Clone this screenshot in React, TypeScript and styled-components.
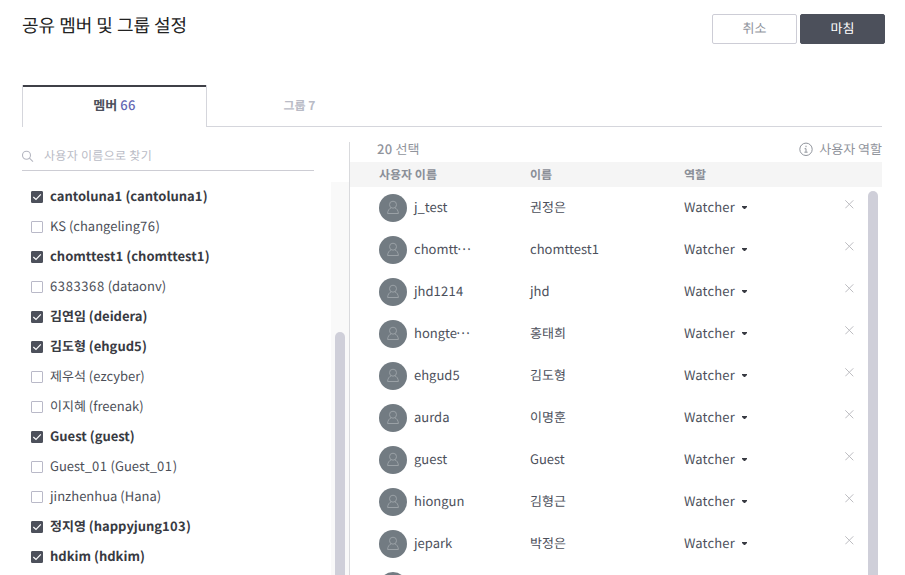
import React from 'react';
import styled, { createGlobalStyle } from 'styled-components';

const GlobalStyle = createGlobalStyle`
  * { box-sizing: border-box; }
  body {
    margin: 0;
    background: #fff;
    overflow: hidden;
    font-family: 'Noto Sans CJK KR', 'Noto Sans', sans-serif;
    font-size: 13px;
    color: #4c505b;
    text-rendering: geometricPrecision;
  }
`;

const Page = styled.main`
  width: 905px;
  height: 575px;
  overflow: hidden;
  display: flex;
  flex-direction: column;
`;

const Header = styled.header`
  height: 85px;
  padding: 14px 20px 0 22px;
  display: flex;
  justify-content: space-between;
  align-items: flex-start;
`;

const Title = styled.h1`
  margin: 0;
  font-size: 18px;
  font-weight: 400;
  line-height: 22px;
  color: #222;
`;

const Actions = styled.div`
  display: flex;
  gap: 3px;
`;

const Button = styled.button<{ $primary?: boolean }>`
  width: 85px;
  height: 30px;
  padding: 0 0 2px;
  border: 1px solid ${p => (p.$primary ? '#4c505b' : '#cdcdd6')};
  border-radius: 2px;
  background: ${p => (p.$primary ? '#4c505b' : '#fff')};
  color: ${p => (p.$primary ? '#fff' : '#90949c')};
  font: inherit;
  line-height: 26px;
  text-rendering: inherit;
`;

const Tabs = styled.nav`
  display: flex;
  height: 42px;
  margin: 0 23px 0 22px;
`;

const Tab = styled.div<{ $active?: boolean }>`
  width: 185px;
  height: 42px;
  text-align: center;
  font-size: ${p => (p.$active ? 13 : 12)}px;
  font-weight: 700;
  line-height: ${p => (p.$active ? 40 : 42)}px;
  color: ${p => (p.$active ? '#4c505b' : '#b9bbc6')};
  border: solid #d5d6dc;
  border-width: ${p => (p.$active ? '0 1px' : '0 0 1px')};
  box-shadow: ${p => (p.$active ? 'inset 0 2px 0 #3f4047' : 'none')};
`;

const TabFill = styled.div`
  flex: 1;
  border-bottom: 1px solid #d5d6dc;
`;

const Count = styled.span`
  color: #6468b4;
  font-weight: 500;
  letter-spacing: 0.4px;
`;

const Body = styled.div`
  display: flex;
  flex: 1;
  min-height: 0;
  margin: 0 23px 0 22px;
`;

const Picker = styled.section`
  width: 327px;
  display: flex;
  flex-direction: column;
`;

const Search = styled.label`
  display: flex;
  align-items: center;
  gap: 10px;
  width: 292px;
  height: 44px;
  padding-top: 13px;
  border-bottom: 1px solid #cdcdd4;
  color: #b9bbc5;
  font-size: 12px;
  letter-spacing: 0.3px;
  line-height: 30px;
  svg { margin-top: 2px; }
`;

const SearchHint = styled.span`
  padding-top: 1px;
`;

const ListArea = styled.div`
  display: flex;
  flex: 1;
  min-height: 0;
  margin-top: 11px;
  overflow: hidden;
`;

const List = styled.ul`
  flex: 1;
  margin: 0;
  padding: 0 0 0 9px;
  list-style: none;
`;

const Member = styled.li<{ $checked: boolean }>`
  display: flex;
  align-items: center;
  gap: 7px;
  height: 30px;
  line-height: 28px;
  white-space: nowrap;
  color: ${p => (p.$checked ? '#383a42' : '#4c4f58')};
  font-weight: ${p => (p.$checked ? 700 : 400)};
`;

const MemberName = styled.span`
  height: 30px;
`;

const Digits = styled.span<{ $spacing: number }>`
  letter-spacing: ${p => p.$spacing}px;
`;

const Ellipsis = styled.span`
  line-height: 0;
  vertical-align: 4px;
  letter-spacing: -0.5px;
  margin-left: -1px;
`;

const Box = styled.span<{ $checked: boolean }>`
  width: 12px;
  height: 12px;
  display: flex;
  border: 1px solid ${p => (p.$checked ? '#4c505b' : '#b9b9c8')};
  border-radius: 1px;
  background: ${p => (p.$checked ? '#4c505b' : '#fff')};
`;

const Track = styled.div`
  width: 18px;
  padding: 150px 4px 0;
  display: flex;
  background: #f9f9f9;
`;

const Thumb = styled.div`
  width: 10px;
  flex: none;
  border-radius: 5px 5px 0 0;
  background: #cfcfd9;
`;

const Selected = styled.section`
  flex: 1;
  margin-top: 15px;
  border-left: 1px solid #d9dadd;
  display: flex;
  flex-direction: column;
  min-width: 0;
`;

const Summary = styled.div`
  display: flex;
  justify-content: space-between;
  height: 20px;
  padding-left: 27px;
  line-height: 14px;
  color: #90949c;
  b { font-weight: 500; letter-spacing: 0.4px; }
`;

const RoleHelp = styled.span`
  display: flex;
  gap: 6px;
`;

const TableHead = styled.div`
  display: grid;
  grid-template-columns: 151px 154px 1fr;
  height: 25px;
  padding-left: 29px;
  line-height: 26px;
  background: #f5f5f5;
  color: #8b8f98;
  font-size: 12px;
  font-weight: 700;
`;

const Rows = styled.div`
  flex: 1;
  min-height: 0;
  display: flex;
  overflow: hidden;
`;

const RowList = styled.div`
  width: 518px;
`;

const RowThumb = styled(Thumb)`
  margin-top: 4px;
`;

const Row = styled.div`
  display: grid;
  grid-template-columns: 35px 116px 154px 161px 1fr;
  height: 42px;
  padding-left: 29px;
  line-height: 40px;
`;

const Avatar = styled.span`
  width: 28px;
  height: 28px;
  margin-top: 7px;
  display: flex;
  align-items: center;
  justify-content: center;
  border-radius: 50%;
  background: #727b82;
`;

const Role = styled.span`
  display: flex;
  gap: 7px;
  letter-spacing: 0.15px;
`;

const Caret = styled.svg`
  margin-top: 19px;
`;

const Remove = styled.svg`
  margin-top: 13px;
`;

const PersonIcon = () => (
  <Avatar>
    <svg width="12" height="16" viewBox="0 0 12 16" fill="none" stroke="#9aa1a6">
      <circle cx="6" cy="4.7" r="3.5" />
      <path d="M4.3 7.8C2 8.6.8 10.6.6 13.5h10.8C11.2 10.6 10 8.6 7.7 7.8" />
    </svg>
  </Avatar>
);

/* Opens up runs of digits slightly and centres the truncation dots. */
const Name = ({ text, spacing }: { text: string; spacing: number }) => (
  <>
    {text.split(/(\d+|…)/).map((part, i) => {
      if (part === '…') return <Ellipsis key={i}>…</Ellipsis>;
      if (/^\d+$/.test(part)) return <Digits key={i} $spacing={spacing}>{part}</Digits>;
      return part;
    })}
  </>
);

const members: [string, boolean][] = [
  ['cantoluna1 (cantoluna1)', true],
  ['KS (changeling76)', false],
  ['chomttest1 (chomttest1)', true],
  ['6383368 (dataonv)', false],
  ['김연임 (deidera)', true],
  ['김도형 (ehgud5)', true],
  ['제우석 (ezcyber)', false],
  ['이지혜 (freenak)', false],
  ['Guest (guest)', true],
  ['Guest_01 (Guest_01)', false],
  ['jinzhenhua (Hana)', false],
  ['정지영 (happyjung103)', true],
  ['hdkim (hdkim)', true],
];

const selected: [string, string][] = [
  ['j_test', '권정은'],
  ['chomtt…', 'chomttest1'],
  ['jhd1214', 'jhd'],
  ['hongte…', '홍태희'],
  ['ehgud5', '김도형'],
  ['aurda', '이명훈'],
  ['guest', 'Guest'],
  ['hiongun', '김형근'],
  ['jepark', '박정은'],
];

export default function App() {
  return (
    <Page>
      <GlobalStyle />
      <Header>
        <Title>공유 멤버 및 그룹 설정</Title>
        <Actions>
          <Button>취소</Button>
          <Button $primary>마침</Button>
        </Actions>
      </Header>
      <Tabs>
        <Tab $active>멤버 <Count>66</Count></Tab>
        <Tab>그룹 7</Tab>
        <TabFill />
      </Tabs>
      <Body>
        <Picker>
          <Search>
            <svg width="12" height="12" viewBox="0 0 12 12" fill="none" stroke="#b4b6c0" strokeWidth="1.1">
              <circle cx="4.5" cy="5.2" r="4" />
              <path d="M7.4 8.1 11 11.6" />
            </svg>
            <SearchHint>사용자 이름으로 찾기</SearchHint>
          </Search>
          <ListArea>
            <List>
              {members.map(([name, checked]) => (
                <Member key={name} $checked={checked}>
                  <Box $checked={checked}>
                    {checked && (
                      <svg width="10" height="10" viewBox="0 0 10 10" fill="none" stroke="#fff" strokeWidth="1.2">
                        <path d="M1.3 5 4 7.5 8.8 2.4" />
                      </svg>
                    )}
                  </Box>
                  <MemberName><Name text={name} spacing={checked ? 0.3 : 0.6} /></MemberName>
                </Member>
              ))}
            </List>
            <Track><Thumb /></Track>
          </ListArea>
        </Picker>
        <Selected>
          <Summary>
            <span><b>20</b> 선택</span>
            <RoleHelp>
              <svg width="14" height="14" viewBox="0 0 14 14" fill="none" stroke="#90949c">
                <circle cx="7" cy="7.3" r="6.2" />
                <path d="M7 3.7v1.5M5.6 6.7H7v3.3M5.4 10.2h3.2" />
              </svg>
              사용자 역할
            </RoleHelp>
          </Summary>
          <TableHead>
            <span>사용자 이름</span>
            <span>이름</span>
            <span>역할</span>
          </TableHead>
          <Rows>
            <RowList>
              {selected.map(([id, name]) => (
                <Row key={id}>
                  <PersonIcon />
                  <span><Name text={id} spacing={0.3} /></span>
                  <span><Name text={name} spacing={0.3} /></span>
                  <Role>
                    Watcher
                    <Caret width="5" height="3" viewBox="0 0 5 3"><path d="M0 0h5v1L3 3H2L0 1z" fill="#383a42" /></Caret>
                  </Role>
                  <Remove width="9" height="9" viewBox="0 0 9 9" stroke="#bdbdc1"><path d="M.3.3l8 8M8.3.3l-8 8" /></Remove>
                </Row>
              ))}
              <Row><PersonIcon /></Row>
            </RowList>
            <RowThumb />
          </Rows>
        </Selected>
      </Body>
    </Page>
  );
}
